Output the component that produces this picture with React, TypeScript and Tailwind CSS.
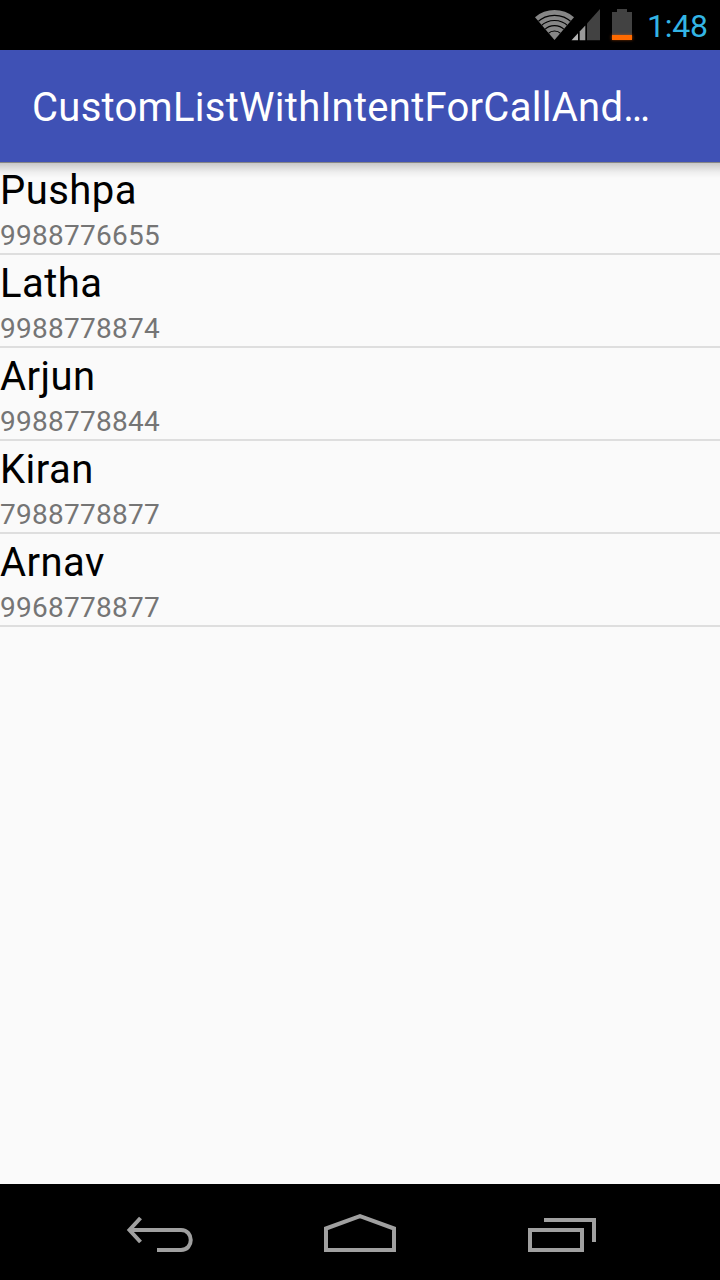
const contacts = [
  { name: "Pushpa", phone: "9988776655" },
  { name: "Latha", phone: "9988778874" },
  { name: "Arjun", phone: "9988778844" },
  { name: "Kiran", phone: "7988778877" },
  { name: "Arnav", phone: "9968778877" },
];

const fan = "M554.5 40L535 17.2A30 30 0 0 1 574 17.2Z";

function StatusIcons() {
  return (
    <svg width="104" height="50" viewBox="532 0 104 50" className="shrink-0">
      <defs>
        <clipPath id="fan">
          <path d={fan} />
        </clipPath>
        <filter id="glow" x="-30%" y="-100%" width="160%" height="300%">
          <feGaussianBlur stdDeviation="1.5" />
        </filter>
      </defs>
      <path d={fan} fill="#868686" />
      <g clipPath="url(#fan)" fill="none" stroke="#000" strokeWidth="1.2">
        <circle cx="554.5" cy="40" r="24.7" />
        <circle cx="554.5" cy="40" r="19.5" />
        <circle cx="554.5" cy="40" r="14.3" />
        <circle cx="554.5" cy="40" r="9" />
      </g>
      <path d="M571.5 40.3L578 33.3V40.3Z" fill="#b5b5b5" />
      <path d="M579.7 31.5L585.3 25.5V40.3H579.7Z" fill="#999" />
      <path d="M587 23.5L600 9V40.3H587Z" fill="#424242" />
      <path d="M612 12H617V9H627V12H632V36H612Z" fill="#424242" />
      <path d="M611.5 35H632.5V40H611.5Z" fill="#ff6600" opacity=".5" filter="url(#glow)" />
      <path d="M612 35H632V40H612Z" fill="#ff6a00" />
    </svg>
  );
}

export default function App() {
  return (
    <div className="flex h-[1280px] w-[720px] flex-col overflow-hidden bg-[#fafafa] font-[Roboto,sans-serif]">
      <div className="flex h-[50px] shrink-0 items-center justify-end bg-black">
        <StatusIcons />
        <span className="w-[84px] pt-0.5 pl-[11px] text-[32px] leading-[50px] tracking-[-0.2px] text-[#33b5e5]">1:48</span>
      </div>
      <header className="relative flex h-28 shrink-0 items-center bg-[#3f51b5] px-8">
        <h1 className="pt-1 text-[40px] leading-[48px] tracking-[0.27px] whitespace-nowrap text-white">
          CustomListWithIntentForCallAnd…
        </h1>
        <div className="absolute inset-x-0 top-full h-4 border-t border-[#858585] bg-gradient-to-b from-black/20 via-black/5 via-60% to-transparent" />
      </header>
      <ul className="flex-1">
        {contacts.map((c) => (
          <li key={c.name} className="h-[93px] border-b-2 border-[#dedede]">
            <p className="h-[57px] text-[40px] leading-[57px] tracking-[0.45px] text-black">{c.name}</p>
            <p className="h-[34px] text-[28px] leading-[33px] tracking-[0.25px] text-[#757575]">{c.phone}</p>
          </li>
        ))}
      </ul>
      <nav className="h-24 shrink-0 bg-black">
        <svg width="720" height="96" viewBox="0 1184 720 96" fill="none" stroke="#a0a0a0" strokeWidth="4">
          <path d="M129 1230H181C194 1230 194 1250 181 1250H157" />
          <path d="M140.5 1218L129.5 1230L140.5 1242" />
          <path d="M326 1250V1228.5L360 1216.2L394 1228.5V1250Z" />
          <path d="M530 1230H582V1250H530ZM544 1220H594V1242" />
        </svg>
      </nav>
    </div>
  );
}
